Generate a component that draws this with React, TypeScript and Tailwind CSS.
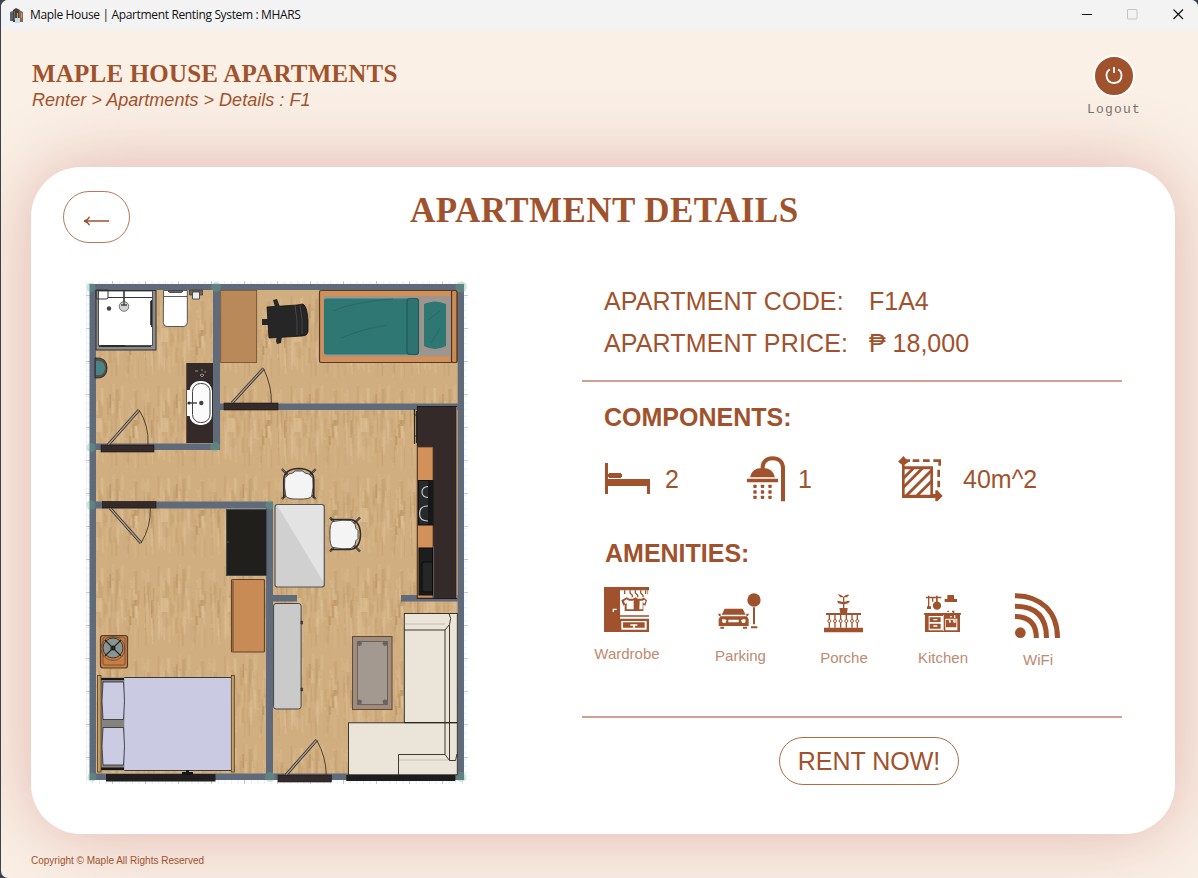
import React from "react";

const SIENNA = "#a0522d";
const WALL = "#5f6b7a";
const DARK = "#342a2a";

/** Small deterministic generator used for the parquet grain. */
function makeStreaks() {
  let seed = 71;
  const next = () => {
    seed = (seed * 1103515245 + 12345) % 2147483648;
    return seed / 2147483648;
  };
  const tones = ["#bd9767", "#dfc196", "#c5a071", "#dabb8c", "#b89162", "#e1c79e"];
  return Array.from({ length: 130 }, (_, i) => ({
    x: Math.round(next() * 64 * 2) / 2,
    y: Math.round(next() * 66),
    w: 1 + next() * 1.5,
    h: 12 + next() * 12,
    fill: tones[i % tones.length],
    opacity: 0.2 + next() * 0.28,
  }));
}
const streaks = makeStreaks();

function Door({ bar, leaf, end, bend }: { bar: number[]; leaf: number[]; end: number[]; bend: number[] }) {
  return (
    <g>
      <path d={`M${leaf[0]} ${leaf[1]}L${leaf[2]} ${leaf[3]}`} stroke="#3b3632" strokeWidth="3" />
      <path d={`M${leaf[0]} ${leaf[1]}L${leaf[2]} ${leaf[3]}`} stroke="#aaa194" strokeWidth="1.2" />
      <path d={`M${leaf[2]} ${leaf[3]}Q${bend[0]} ${bend[1]} ${end[0]} ${end[1]}`} fill="none" stroke="#3a332c" strokeWidth="0.9" />
      <rect x={bar[0]} y={bar[1]} width={bar[2]} height={bar[3]} fill={DARK} stroke="#1c1717" strokeWidth="0.6" />
    </g>
  );
}

function DiningChair({ x, y, turn }: { x: number; y: number; turn: number }) {
  return (
    <g transform={`translate(${x} ${y}) rotate(${turn})`} stroke="#2c2c2c" fill="none">
      <path d="M-17-15L-10-8M17-15L10-8M-17 15L-10 9M17 15L10 9" strokeWidth="2.2" />
      <path d="M-17-15L-10-8M17-15L10-8M-17 15L-10 9M17 15L10 9" strokeWidth="0.7" stroke="#aaa" />
      <path d="M-15 14V-4Q-15-15 0-15.500Q15-15 15-4V14" strokeWidth="1.600" />
      <path d="M-13 12Q-15 3-14-6L-12-8L-10-10L-6-11L-4-13H4L6-11L10-10L12-8L14-6Q15 3 13 12Q11 15.500 0 15Q-11 15.500-13 12Z" fill="#f4f4f5" strokeWidth="0.8" />
    </g>
  );
}

function FloorPlan() {
  const ticks = Array.from({ length: 12 }, (_, i) => 112.500 + i * 33);
  return (
    <svg className="block shrink-0" width="382" height="503" viewBox="86 281 382 503" role="img" aria-label="Floor plan">
      <defs>
        <pattern id="wood" width="66.500" height="90" patternUnits="userSpaceOnUse" patternTransform="translate(8 24)">
          <rect width="66.500" height="90" fill="#d1ae80" />
          {streaks.map((s, i) => (
            <rect key={i} x={s.x} y={s.y} width={s.w} height={s.h} fill={s.fill} opacity={s.opacity} />
          ))}
          <path d="M58 40h2v14h-2zM55 52h2v9h-2zM59 36h4v6h-4zM10 36h1.500v18h-1.500zM35 10h1.500v14h-1.500z" fill="#a97d49" opacity="0.45" />
          <path d="M20 34h7v14h-7z" fill="#e0c295" opacity="0.6" />
        </pattern>
        <pattern id="grid" width="6.600" height="6.600" patternUnits="userSpaceOnUse">
          <path d="M0 .5H6.600M.5 0V6.600" stroke="#e4e9f0" strokeWidth="0.7" />
        </pattern>
      </defs>
      <rect x="86" y="281" width="381" height="503" fill="#fbfcfd" />
      <rect x="86" y="281" width="381" height="503" fill="url(#grid)" />
      <g stroke="#c5cad3" strokeWidth="1">
        {ticks.map((t) => <path key={t} d={`M${t} 281v4M${t} 780v4`} />)}
        {Array.from({ length: 15 }, (_, i) => 295.500 + i * 33).map((t) => <path key={t} d={`M86 ${t}h4M463 ${t}h5`} />)}
      </g>

      {/* Floor and walls */}
      <rect x="93" y="287" width="368" height="490" fill="url(#wood)" />
      <g fill={WALL}>
        <path fillRule="evenodd" d="M89.500 284H464V780H89.500ZM96 290V773.500H457.700V290Z" />
        <path d="M213 287h7v163h-7zM90 443.500h130v6.500H90zM213 403.500h250v6.500H213zM90 501.500h183v7H90zM266 502h7v277h-7zM272 595h25v6.500H272zM401 595h60v6.500h-60z" />
      </g>
      <g fill="#65b793" opacity="0.32">
        <circle cx="91" cy="287.500" r="4.500" /><circle cx="216" cy="287" r="5" /><circle cx="461" cy="287" r="5.500" />
        <circle cx="91" cy="447.500" r="4.500" /><circle cx="215" cy="447" r="5" /><circle cx="91" cy="505" r="4.500" />
        <circle cx="270" cy="505" r="4.500" /><circle cx="92" cy="777" r="4.500" /><circle cx="270" cy="777" r="5" /><circle cx="461" cy="777" r="5" />
      </g>

      {/* Bathroom */}
      <rect x="96" y="290.500" width="60" height="59.500" fill="#8c8c8e" stroke="#303030" />
      <rect x="98.500" y="291" width="54" height="54.500" fill="#fff" stroke="#333" strokeWidth="0.8" />
      <path d="M96 290h12v7q0 2-2 2H98q-2 0-2-2zM108 297.500h44M124 290v14M151.500 300v27M99 346.500h52" fill="none" stroke="#353535" />
      <path d="M101 346h24M151 301v24" stroke="#222" strokeWidth="1.600" />
      <circle cx="124" cy="306.500" r="4.800" fill="#d1d3d4" stroke="#555" strokeWidth="0.8" />
      <path d="M124 291v14m-3 0h6" stroke="#444" strokeWidth="1.400" />
      <circle cx="109" cy="308.500" r="2.200" fill="#444" />
      <path d="M163.500 290.500h23.800v32q0 4-4 4h-16q-4 0-4-4z" fill="#fff" stroke="#333" strokeWidth="0.8" />
      <path d="M164 296.500h23M168 291h15l-1.500 1.500h-12z" fill="#888" stroke="#333" strokeWidth="0.8" />
      <path d="M189.500 290h13v5h-13z" fill="#6d655e" stroke="#333" strokeWidth="0.7" />
      <path d="M192.500 292h7v7h-7z" fill="#eee" stroke="#333" strokeWidth="0.8" />
      <path d="M95 358q12-1 12 10t-12 10z" fill="#55504c" stroke="#2d2929" />
      <path d="M96 361q9-1 9 7t-9 7z" fill="#4a8486" />
      <rect x="186.300" y="363" width="26.700" height="80" fill={DARK} />
      <path d="M195 371h3m3-1h2m1 2h2m-6 3l2-1l2 1l-2 2z" stroke="#aaa" strokeWidth="0.8" fill="none" />
      <rect x="187" y="390" width="7" height="26" fill="#fafafa" />
      <rect x="189.500" y="381" width="22.500" height="44" rx="10" fill="#fff" />
      <rect x="192.500" y="383.500" width="17.500" height="39" rx="8" fill="#fbfbfb" stroke="#444" />
      <path d="M188 403h9" stroke="#333" strokeWidth="1.300" />
      <circle cx="189" cy="403" r="1.600" fill="#333" /><circle cx="201.300" cy="403" r="2.200" fill="#444" />

      {/* Study room */}
      <rect x="220.700" y="290.300" width="36" height="72.300" fill="#b98959" stroke="#69492f" strokeWidth="0.8" />
      <g fill="#262626">
        <path d="M267 307L297 305L303 304Q307 306 308 320V332Q307 336 302 336L269 338Z" stroke="#111" strokeWidth="0.8" />
        <path d="M273 300l4-1 3 8h-5zM277 336h5l-1 7-4 1-1-3zM262 319h6v6h-6z" />
        <path d="M295 305q3 16 2 30M300 305q3 15 2 29" fill="none" stroke="#555" strokeWidth="0.7" />
      </g>
      <rect x="319.500" y="290.500" width="137.500" height="72" rx="1.500" fill="#d29159" stroke="#503b2c" strokeWidth="1.200" />
      <rect x="451.500" y="290.500" width="5.500" height="72" rx="1.500" fill="#cc8a52" stroke="#4b3424" strokeWidth="1.200" />
      <rect x="323.500" y="296" width="127.500" height="60.500" fill="#9d958e" />
      <rect x="324" y="298.500" width="95" height="56" rx="2" fill="#2f7773" />
      <rect x="407" y="298.500" width="11.500" height="56" rx="3" fill="#2d7470" stroke="#225b59" strokeWidth="1.200" />
      <path d="M424 304Q435 299 446 304V346Q435 352 424 346Z" fill="#2f7773" />
      <path d="M333 311Q352 302 393 299M341 338Q362 329 387 325M428 320L440 311M431 343L440 328" fill="none" stroke="#225c60" strokeWidth="0.9" opacity=".6" />

      {/* Kitchen and dining */}
      <rect x="417.300" y="406.500" width="39" height="192" fill={DARK} stroke="#201a1a" />
      <rect x="417.600" y="447" width="15.400" height="151" fill="#d29159" stroke="#543927" strokeWidth="0.8" />
      <path d="M456.800 407v191" stroke="#ae9070" />
      <path d="M414.500 409v35M416.500 411v32M414 415h4M414 436h4" stroke="#29211f" strokeWidth="1.200" />
      <rect x="418.500" y="480.500" width="14.500" height="44.500" fill="#28292a" stroke="#111" />
      <path d="M428 480h5v45h-5z" fill="#171819" />
      <path d="M428 486.500Q422 487 422 492T428 497.500M428 506Q419.500 506 419.500 513.500T428 521" fill="none" stroke="#c8c8c8" strokeWidth="1.200" />
      <path d="M433 546v52" stroke="#696969" strokeWidth="1.500" />
      <rect x="419" y="548" width="13.500" height="47" fill="#1c1e1e" stroke="#080808" />
      <path d="M432 562h-8q-2 0-2 2v28h10" fill="#252727" stroke="#080808" />
      <DiningChair x={298.800} y={484} turn={0} />
      <DiningChair x={345} y={534.500} turn={90} />
      <rect x="275" y="504.500" width="49.300" height="82.500" rx="2.500" fill="#d0d0d0" />
      <path d="M277 505H322Q324 505 324 507V583Z" fill="#e3e3e3" />
      <rect x="275" y="504.500" width="49.300" height="82.500" rx="2.500" fill="none" stroke="#555" strokeWidth="1.200" />

      {/* Living room */}
      <rect x="273.600" y="603.500" width="27.500" height="105.500" rx="2.500" fill="#cacaca" stroke="#444" />
      <path d="M301 621h1.500v3H301zM301 688h1.500v3H301z" fill="#444" stroke="#222" strokeWidth="0.6" />
      <rect x="352.500" y="636.500" width="39.500" height="73" fill="#a18c7b" stroke="#5d4b3e" />
      <rect x="357.500" y="641.500" width="30" height="63" fill="#a39990" stroke="#5c5552" strokeWidth="0.8" />
      {[[359.500, 643.500], [385, 643.500], [359.500, 702], [385, 702]].map(([cx, cy]) => (
        <circle key={`${cx}-${cy}`} cx={cx} cy={cy} r="2.400" fill="#666363" />
      ))}
      <g fill="#ebe4d8" stroke="#292520" strokeWidth="0.9">
        <rect x="404.300" y="613.500" width="53" height="109" />
        <rect x="348.500" y="722.800" width="108.800" height="52" />
        <path d="M404.300 630H445L449.500 624.500Q452 618 449 613.500M445 630V754.500M449.500 625V760M445 754.500H398.500V775M445 754.500L449.500 760.500H455.500L457 754M404 722.700H457" fill="none" />
      </g>
      <path d="M404 624h41M399 760h50" stroke="#8b8175" strokeWidth="0.6" opacity="0.6" />

      {/* Bedroom */}
      <rect x="226.500" y="509.500" width="40" height="66" fill="#201f1b" stroke="#3d4d50" />
      <path d="M226 542h3" stroke="#555" />
      <rect x="231.500" y="579.500" width="33" height="72.500" rx="1" fill="#c98b56" stroke="#65432b" strokeWidth="1.200" />
      <path d="M233 581V651" stroke="#6d4930" />
      <rect x="100.500" y="635.500" width="27" height="32.500" rx="2.500" fill="#c57f45" stroke="#503c2d" strokeWidth="1.200" />
      <rect x="103" y="637" width="22" height="28" rx="2" fill="none" stroke="#73482e" strokeWidth="0.8" />
      <circle cx="113" cy="648.500" r="12" fill="none" stroke="#6e432b" strokeWidth="0.8" />
      <circle cx="113" cy="648" r="10" fill="#8b9391" stroke="#36393a" />
      <path d="M105 640l16 16M121 640l-16 16" stroke="#20272b" strokeWidth="1.100" /><circle cx="113" cy="648" r="2.500" fill="#1c2227" />
      <rect x="101" y="677.500" width="24" height="93" fill="#85837c" />
      <path d="M101 678h23v2h-23zM101 767.500h23v2.500h-23z" fill="#171717" />
      <rect x="124.300" y="677.500" width="107" height="93" fill="#cacbe2" />
      <path d="M124.300 677.500H231.500M124.300 770.500H231.500" stroke="#3a3838" />
      <path d="M103 682H123.500Q125.500 701 123.500 719.500H103Q101 701 103 682ZM103 727.500H123.500Q125.500 746 123.500 765H103Q101 746 103 727.500Z" fill="#cbcbe4" stroke="#292a30" strokeWidth="0.8" />
      <rect x="97.500" y="675.500" width="3.500" height="96.500" fill="#c49e62" stroke="#4b3a25" strokeWidth="0.8" />
      <rect x="231.300" y="675.500" width="3" height="96.500" fill="#c49e62" stroke="#4b3a25" strokeWidth="0.8" />

      {/* Doors and windows */}
      <Door bar={[101, 445, 53, 7]} leaf={[108, 445, 139, 410]} end={[148, 445]} bend={[149, 425]} />
      <Door bar={[224, 403, 54, 7]} leaf={[232, 403, 263.500, 368.500]} end={[271.300, 403]} bend={[272, 386]} />
      <Door bar={[102.500, 501.500, 53.500, 6.500]} leaf={[110, 508, 141, 543]} end={[150.300, 508]} bend={[151, 527]} />
      <Door bar={[278, 775, 53.500, 7]} leaf={[286, 775, 316.700, 740]} end={[326.300, 775]} bend={[326, 757]} />
      <rect x="106" y="774" width="109.500" height="7.500" fill="#201e1f" />
      <path d="M182 772h4v-2h3v2h4v3h-11z" fill="#151515" />
      <rect x="346.300" y="775" width="109" height="6" fill="#1d1d1e" />
    </svg>
  );
}

function BedIcon() {
  return (
    <svg width="45" height="32" viewBox="75 68 135 96" fill={SIENNA} shapeRendering="crispEdges">
      <path d="M75 68h9v48h126v46h-9v-25H84v25h-9z" />
      <path d="M84 104l3-5h36l3 5v5l-4 4H87l-3-4z" />
    </svg>
  );
}

function ShowerIcon() {
  return (
    <svg width="39" height="46" viewBox="501 47 117 138" fill={SIENNA}>
      <path d="M548 90V80C548 65 560 53.500 577 53.500C597 53.500 609 65 609 84V183" fill="none" stroke={SIENNA} strokeWidth="12" />
      <path d="M510 111Q515 83 547 83Q579 83 585 111ZM501 115h93v11h-93z" />
      {[525, 547.5, 570].map((x) =>
        [138, 155, 171].map((y) => <rect key={`${x}-${y}`} x={x - 5} y={y - 5} width="10" height="10" rx="2" />)
      )}
    </svg>
  );
}

function AreaIcon() {
  return (
    <svg width="46" height="46" viewBox="954 47 138 138" fill={SIENNA}>
      <defs><clipPath id="area-clip"><path d="M967 82h89v87h-89z" /></clipPath></defs>
      <path d="M954 64l10-10 6-7 6 7 10 10-12 9v5h85v83h7v-11h6l16 17-16 16h-6v-10H966V73zM974 87v76h77V87z" fillRule="evenodd" />
      <g clipPath="url(#area-clip)" stroke={SIENNA} strokeWidth="8.500">
        <path d="M952 132l60-60M952 159l90-90M968 177l102-102M997 180l70-70" />
      </g>
      <path d="M974 61h16M998 61h20M1029 61h20M1060 61h19v15M1076 88v22M1076 121v20" fill="none" stroke={SIENNA} strokeWidth="8" />
    </svg>
  );
}

function WardrobeIcon() {
  return (
    <svg width="45" height="45" viewBox="72 36 135 135" fill={SIENNA}>
      <path d="M72 36h48v95h87v40H72zM124 138v26h76v-26z" fillRule="evenodd" />
      <path d="M118 36h89v10h-89zM118 121h89v4h-89zM129 142h65v16h-65z" />
      <path d="M203 44v14" stroke={SIENNA} strokeWidth="2" />
      <path d="M100 111v-8h10" fill="none" stroke="#fff" strokeWidth="4" />
      <path d="M151 148h21v4h-7v6h-6v-6h-8z" fill="#fff" />
      <path d="M134 46v11M150 46v8l7 7v6M166 46v8l7 7v6M182 46v8l7 7v6M197 46v11" fill="none" stroke={SIENNA} strokeWidth="4" />
      <path d="M140 67l8 4h10l9-4 6 4h11l8-3 9 8-5 16-6-3v19h-56V89l-4 3-6-16z" />
      <path d="M140 73l7 4h11l3-2v28h-21V84l-5 3-3-9zM179 77h8l6-3 4 4-4 8-5-4v21h-10z" fill="#fff" />
    </svg>
  );
}

function ParkingIcon() {
  return (
    <svg width="43" height="36" viewBox="414 55 129 108" fill={SIENNA}>
      <circle cx="522" cy="76" r="20" />
      <path d="M519 98h6v51h-6zM513 155h19v6h-19zM434 102h54l9 18h-72zM414 117h8v7h-5zM499 117h8l-3 7h-5zM421 125h80l5 9v20h-90v-20zM421 156h11v6h-11zM489 156h12v6h-12z" />
      <path d="M427 134h7l6 3-4 8h-7l-3-5zM445 135h31v8h-31zM496 134h-7l-6 3 4 8h7l3-5z" fill="#fff" />
    </svg>
  );
}

function PorchIcon() {
  return (
    <svg width="39" height="39" viewBox="42 57 117 117" fill={SIENNA}>
      <path d="M83 58l8 1 10 6 8-6h9l-7 8H91zM81 77l10 2 9 3 9-3 11-2-5 8-12 3h-6l-12-3zM99 65h4v34h-4zM88 99h25l-2 16H91zM48 114h105v6H48zM42 158h117v14H42z" />
      {[58, 75, 92, 109, 126, 142].map((x) => (
        <g key={x}><path d={`M${x} 119V158`} stroke={SIENNA} strokeWidth="4" /><circle cx={x} cy="138" r="4.500" fill="#fff" stroke={SIENNA} strokeWidth="3" /></g>
      ))}
    </svg>
  );
}

function KitchenIcon() {
  return (
    <svg width="37" height="37" viewBox="342 60 111 111" fill={SIENNA}>
      <path d="M348 65h46v5h-46zM354 62h4v32h5v8h-12v-8h3zM366 65h4v15h-4zM378 62h5v20h-5zM412 60h20v12h9v9h-37v-9h8zM342 114h111v5h-3v52H345v-52h-3z" />
      <circle cx="381" cy="92" r="12.500" />
      <path d="M412 107h5v7h9v-7h7v7h-5v-3h-2v7h-9v-7h-5z" />
      <path d="M356 123h43v43h-43zM406 131h36v35h-36z" fill="#fff" />
      <path d="M359 127h33v14h-33zM359 146h33v15h-33zM408 134h31v23h-31z" />
      <path d="M370 132h12v4h-12zM370 151h12v4h-12zM416 136h6v7h-4zM428 136h9v7h-6zM401 120v48h-2v-48zM420 123h5v4h-5zM432 121h4v8h-4z" fill="#fff" />
    </svg>
  );
}

function WifiIcon() {
  return (
    <svg width="45" height="45" viewBox="615 54 135 135">
      <circle cx="631" cy="173" r="16" fill={SIENNA} />
      <path d="M615 124.500Q679 125 679 189M615 94Q709.500 94 709.500 189M615 62C693 62 742.500 111 742.500 189" fill="none" stroke={SIENNA} strokeWidth="15" />
    </svg>
  );
}

function Amenity({ className, label, children }: { className: string; label: string; children: React.ReactNode }) {
  return (
    <div className={`flex flex-col items-center text-[15px] leading-[18px] text-[#c08970] ${className}`}>
      <div className="mr-[2px]">{children}</div>
      <span className="whitespace-nowrap">{label}</span>
    </div>
  );
}

function TitleBar() {
  return (
    <div className="flex h-[30px] shrink-0 items-center bg-[#f3f3f3] pl-[9px] text-[#111]">
      <svg width="14" height="15" viewBox="0 0 14 15">
        <path d="M0 4l3-1v10H0z" fill="#52647a" /><path d="M3 2l3-2 4 2v12H3z" fill="#464040" />
        <path d="M4 3h1v9H4zM9 2l4 2v10H9z" fill="#876650" /><path d="M7 5h1v6H7zM11 5h1v5h-1z" fill="#d59b69" /><path d="M5 10h5v5H5z" fill="#cad9e9" />
      </svg>
      <span className="ml-[6px] whitespace-nowrap font-['Open_Sans','Noto_Sans',sans-serif] text-[12px] tracking-[-0.350px]">
        Maple House | Apartment Renting System : MHARS
      </span>
      <div className="ml-auto flex items-center gap-[35px] pb-px pr-[14px]">
        <svg width="10" height="11" viewBox="0 0 10 11"><path d="M0 5.500h10" stroke="#111" /></svg>
        <svg width="11" height="11" viewBox="0 0 11 11"><rect x=".5" y=".5" width="9.500" height="9.500" rx=".5" fill="none" stroke="#c4c4c4" /></svg>
        <svg width="11" height="11" viewBox="0 0 11 11"><path d="M.5.500l9.500 9.500M10 .500L.5 10" stroke="#111" strokeWidth="1.200" /></svg>
      </div>
    </div>
  );
}

export default function App() {
  return (
    <div className="h-[878px] w-[1198px] overflow-hidden bg-[#39424e] pl-px font-['Liberation_Sans',Arial,sans-serif] text-[#a0522d]">
      <div className="flex h-full flex-col overflow-hidden rounded-t-[7px] rounded-bl-[7px] bg-[#faf0e6]">
        <TitleBar />
        <header className="flex h-[137px] shrink-0 justify-between pl-[31px] pr-[57px]">
          <div className="relative z-10 pt-[30px]">
            <h1 className="whitespace-nowrap font-['Liberation_Serif',serif] text-[25px] font-bold leading-[28px] tracking-[0.200px]">MAPLE HOUSE APARTMENTS</h1>
            <p className="whitespace-nowrap text-[18px] italic leading-[24px] tracking-[0.030px]">Renter &gt; Apartments &gt; Details : F1</p>
          </div>
          <button className="relative z-10 flex flex-col items-center self-start pt-[25px]">
            <svg width="42" height="42" viewBox="0 0 42 42">
              <circle cx="21" cy="21" r="20" fill={SIENNA} stroke="#fff" strokeWidth="2" />
              <path d="M17 14.500Q13.500 16 13.500 20.500Q14 28 21 28Q28.500 27.500 28.500 20.500Q28.500 16 25 14.500M21 12v6" fill="none" stroke="#fff" strokeWidth="1.800" />
            </svg>
            <span className="mt-[5px] font-['Liberation_Mono',monospace] text-[13px] leading-[16px] tracking-[1.200px] text-[#7d716c]">Logout</span>
          </button>
        </header>

        <main className="ml-[30px] flex h-[667px] w-[1144px] shrink-0 flex-col rounded-[50px] bg-white shadow-[0_0_75px_#e0b4ac]">
          <div className="flex h-[113px] shrink-0">
            <button aria-label="Back" className="ml-[32px] mt-[24px] flex h-[52px] w-[67px] items-center justify-center rounded-[26px] border border-[#b87858]">
              <svg className="mr-[2px] mt-[7px]" width="26" height="10" viewBox="0 0 26 10" fill="none" stroke={SIENNA} strokeWidth="1.300">
                <path d="M1 5h25M6.500.7Q5 4 1 5Q5 6 6.500 9.300" />
              </svg>
            </button>
            <h2 className="ml-[280px] mt-[22px] whitespace-nowrap font-['Liberation_Serif',serif] text-[35px] font-bold leading-[43px] tracking-[0.450px]">APARTMENT DETAILS</h2>
          </div>

          <div className="flex">
            <div className="ml-[55px] pt-px"><FloorPlan /></div>
            <section className="ml-[114px] w-[540px]">
              <dl className="mt-px grid grid-cols-[265px_1fr] auto-rows-[42px] items-center whitespace-nowrap pl-[22px] text-[25px] tracking-[0.150px]">
                <dt>APARTMENT CODE:</dt><dd className="tracking-normal">F1A4</dd>
                <dt>APARTMENT PRICE:</dt><dd className="tracking-normal">₱ 18,000</dd>
              </dl>
              <hr className="mt-[15px] border-0 border-t-2 border-[#d1a18d]" />
              <h3 className="ml-[22px] mt-[20px] text-[25px] font-bold leading-[30px]">COMPONENTS:</h3>
              <div className="mt-[20px] flex h-[54px] items-center pl-[23px] text-[25px]">
                <BedIcon /><span className="ml-[15px] w-[82px] pt-[2px]">2</span>
                <ShowerIcon /><span className="ml-[12px] w-[100px] pt-[2px]">1</span>
                <AreaIcon /><span className="ml-[19px] pt-[2px]">40m^2</span>
              </div>
              <h3 className="ml-[23px] mt-[32px] text-[25px] font-bold leading-[30px]">AMENITIES:</h3>
              <div className="flex h-[102px] items-start pt-[19px]">
                <Amenity className="ml-[12px] w-[66px] gap-[13px]" label="Wardrobe"><WardrobeIcon /></Amenity>
                <Amenity className="ml-[55px] w-[51px] gap-[18px] pt-[6px]" label="Parking"><ParkingIcon /></Amenity>
                <Amenity className="ml-[54px] w-[48px] gap-[16px] pt-[7px]" label="Porche"><PorchIcon /></Amenity>
                <Amenity className="ml-[50px] w-[50px] gap-[17px] pt-[8px]" label="Kitchen"><KitchenIcon /></Amenity>
                <Amenity className="ml-[47px] w-[46px] gap-[13px] pt-[6px]" label="WiFi"><WifiIcon /></Amenity>
              </div>
              <hr className="mt-[46px] border-0 border-t-2 border-[#d1a18d]" />
              <button className="ml-[197px] mt-[19px] h-[48px] w-[180px] whitespace-nowrap rounded-full border border-[#b06c48] text-[25px] leading-[46px]">RENT NOW!</button>
            </section>
          </div>
        </main>
        <footer className="relative z-10 ml-[30px] mt-[20px] text-[10px] leading-[14px]">Copyright © Maple All Rights Reserved</footer>
      </div>
    </div>
  );
}
